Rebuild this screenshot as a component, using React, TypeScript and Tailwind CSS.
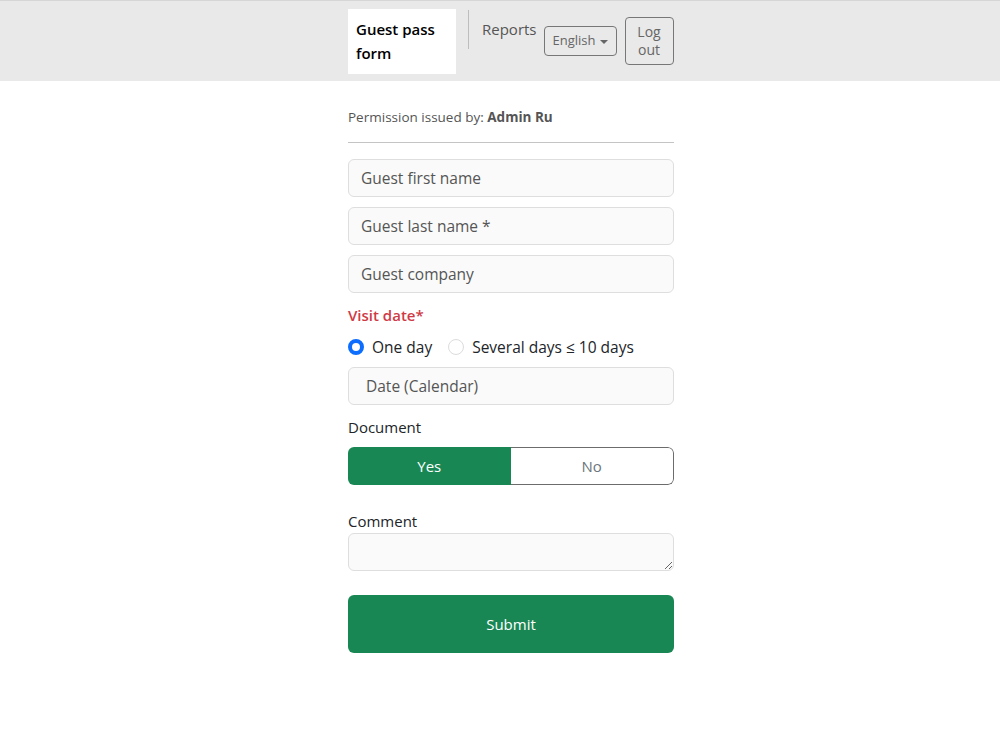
import { useState } from "react";

export default function App() {
  const [range, setRange] = useState<"one" | "several">("one");
  const [doc, setDoc] = useState<"yes" | "no">("yes");

  const inputCls =
    "h-[38px] w-full rounded-md border border-[#dedede] bg-[#fafafa] px-3 text-[15.5px] text-[#333] placeholder:text-[#555] outline-none";

  return (
    <div className="min-h-[750px] bg-white font-['Open_Sans',sans-serif] text-[#212529]">
      <header className="h-[81px] border-t border-[#d6d6d6] bg-[#e9e9e9]">
        <div className="mx-auto w-[348px] pl-[22px]">
          <div className="flex items-start pt-2">
            <div className="w-[108px] bg-white px-2 pt-[8px] pb-[9px] text-[15px] font-semibold leading-[24px] text-black">
              Guest pass
              <br />
              form
            </div>
            <div className="ml-3 mt-[1px] h-[39px] w-px bg-[#bdbdbd]" />
            <div className="ml-[13px] mt-[9px] text-[15px] text-[#555]">Reports</div>
            <button className="ml-[7px] mt-[17px] flex h-[30px] items-center gap-1 rounded border border-[#777] px-[8px] text-[13px] text-[#666]">
              English
              <span className="mt-[1px] border-x-[4px] border-t-[4px] border-x-transparent border-t-[#666]" />
            </button>
            <button className="ml-2 mt-2 flex h-[48px] w-[49px] flex-col items-center justify-center rounded border border-[#777] text-[14px] leading-[18px] text-[#666]">
              <span>Log</span>
              <span>out</span>
            </button>
          </div>
        </div>
      </header>

      <main className="mx-auto w-[348px] pl-[22px] pt-[26px]">
        <p className="text-[13.5px] text-[#555]">
          Permission issued by: <span className="font-bold">Admin Ru</span>
        </p>
        <hr className="mt-[15px] mb-4 border-[#c4c4c4]" />

        <div className="flex flex-col gap-[10px]">
          <input className={inputCls} placeholder="Guest first name" />
          <input className={inputCls} placeholder="Guest last name *" />
          <input className={inputCls} placeholder="Guest company" />
        </div>

        <div className="mt-[10px] text-[15px] font-semibold leading-[24px] text-[#d03a45]">Visit date*</div>

        <div className="mt-[8px] flex items-center text-[15.5px] leading-[24px]">
          <label className="flex items-center gap-2" onClick={() => setRange("one")}>
            <span
              className={
                range === "one"
                  ? "h-4 w-4 rounded-full border-[4px] border-[#0d6efd] bg-white"
                  : "h-4 w-4 rounded-full border border-[#dcdcdc] bg-white"
              }
            />
            One day
          </label>
          <label className="ml-4 flex items-center gap-2" onClick={() => setRange("several")}>
            <span
              className={
                range === "several"
                  ? "h-4 w-4 rounded-full border-[4px] border-[#0d6efd] bg-white"
                  : "h-4 w-4 rounded-full border border-[#dcdcdc] bg-white"
              }
            />
            Several days ≤ 10 days
          </label>
        </div>

        <input className={`${inputCls} mt-[8px] px-[17px]`} placeholder="Date (Calendar)" />

        <div className="mt-[10px] text-[15px] leading-[24px]">Document</div>
        <div className="mt-[8px] flex h-[38px] overflow-hidden rounded-md">
          <button
            onClick={() => setDoc("yes")}
            className={
              doc === "yes"
                ? "flex-1 bg-[#198754] text-[15px] text-white"
                : "flex-1 border-y border-l border-[#6c6c6c] bg-white text-[15px] text-[#6c757d]"
            }
          >
            Yes
          </button>
          <button
            onClick={() => setDoc("no")}
            className={
              doc === "no"
                ? "flex-1 bg-[#198754] text-[15px] text-white"
                : "flex-1 rounded-r-md border-y border-r border-[#6c6c6c] bg-white text-[15px] text-[#6c757d]"
            }
          >
            No
          </button>
        </div>

        <div className="mt-[24px] text-[15px] leading-[24px]">Comment</div>
        <textarea className="block h-[38px] w-full resize-y rounded-md border border-[#dedede] bg-[#fafafa] px-3 text-[15px] outline-none" />

        <button className="mt-[24px] h-[58px] w-full rounded-md bg-[#198754] text-[15px] text-white">
          Submit
        </button>
      </main>
    </div>
  );
}
